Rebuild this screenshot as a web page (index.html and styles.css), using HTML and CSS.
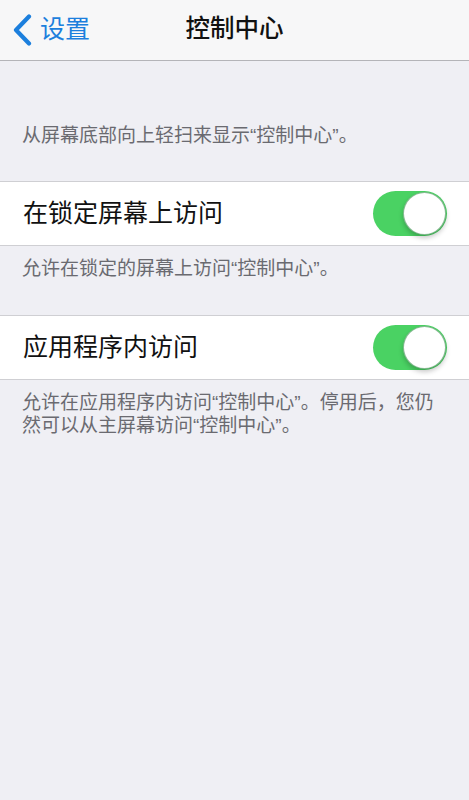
FILE: index.html
```html
<!DOCTYPE html>
<html lang="zh-CN">
<head>
    <meta charset="UTF-8">
    <meta name="viewport" content="width=device-width, initial-scale=1.0">
    <title>控制中心</title>
    <link rel="stylesheet" href="styles.css">
</head>
<body>
    <header class="nav-bar">
        <a class="back-link" href="#">
            <svg class="back-chevron" width="20" height="32" viewBox="0 0 20 32" aria-hidden="true">
                <path d="M17 2.5 L4 16 L17 29.5" fill="none" stroke="currentColor" stroke-width="4.2" stroke-linecap="round" stroke-linejoin="round"/>
            </svg>
            <span>设置</span>
        </a>
        <h1 class="nav-title">控制中心</h1>
        <span class="nav-spacer"></span>
    </header>

    <main class="settings">
        <p class="group-footer intro">从屏幕底部向上轻扫来显示“控制中心”。</p>

        <div class="cell">
            <span class="cell-label">在锁定屏幕上访问</span>
            <span class="switch on"><span class="knob"></span></span>
        </div>
        <p class="group-footer">允许在锁定的屏幕上访问“控制中心”。</p>

        <div class="cell">
            <span class="cell-label">应用程序内访问</span>
            <span class="switch on"><span class="knob"></span></span>
        </div>
        <p class="group-footer">允许在应用程序内访问“控制中心”。停用后，您仍然可以从主屏幕访问“控制中心”。</p>
    </main>
</body>
</html>
```

FILE: styles.css
```css
:root {
    --nav-bg: #f7f7f8;
    --background: #efeff4;
    --card: #ffffff;
    --text: #111111;
    --muted: #6a6a70;
    --blue: #1c7fdd;
    --green: #4ad263;
    --nav-border: #b4b4b8;
    --cell-border: #cfcfd3;
}

* {
    margin: 0;
    padding: 0;
    box-sizing: border-box;
    font-family: "Liberation Sans", "Noto Sans CJK SC", sans-serif;
}

body {
    background-color: var(--background);
    color: var(--text);
    min-height: 100vh;
}

.nav-bar {
    display: grid;
    grid-template-columns: 1fr auto 1fr;
    align-items: center;
    height: 61px;
    padding-bottom: 1px;
    background-color: var(--nav-bg);
    border-bottom: 1px solid var(--nav-border);
}

.back-link {
    display: flex;
    align-items: center;
    gap: 8px;
    padding-left: 12px;
    color: var(--blue);
    text-decoration: none;
    font-size: 25px;
    line-height: 1;
}

.back-chevron {
    display: block;
}

.nav-title {
    font-size: 24.5px;
    font-weight: 500;
    color: var(--text);
    line-height: 1;
}

.group-footer {
    padding: 11px 18px 0 22px;
    font-size: 19px;
    line-height: 23px;
    color: var(--muted);
}

.group-footer.intro {
    padding-top: 63px;
}

.cell {
    display: flex;
    align-items: center;
    justify-content: space-between;
    height: 65px;
    margin-top: 34px;
    padding: 0 22px 0 23px;
    background-color: var(--card);
    border-top: 1px solid var(--cell-border);
    border-bottom: 1px solid var(--cell-border);
}

.group-footer + .cell {
    margin-top: 35px;
}

.group-footer.intro + .cell {
    margin-top: 34px;
}

.cell-label {
    font-size: 25px;
    line-height: 1;
}

.switch {
    display: flex;
    align-items: center;
    justify-content: flex-start;
    width: 74px;
    height: 45px;
    padding: 1px;
    border-radius: 23px;
    background-color: #e5e5ea;
}

.switch.on {
    justify-content: flex-end;
    background-color: var(--green);
}

.knob {
    width: 43px;
    height: 43px;
    border-radius: 50%;
    background-color: #ffffff;
    border: 1px solid rgba(40, 130, 60, 0.55);
    box-shadow: 0 3px 5px rgba(0, 0, 0, 0.22);
}
```
